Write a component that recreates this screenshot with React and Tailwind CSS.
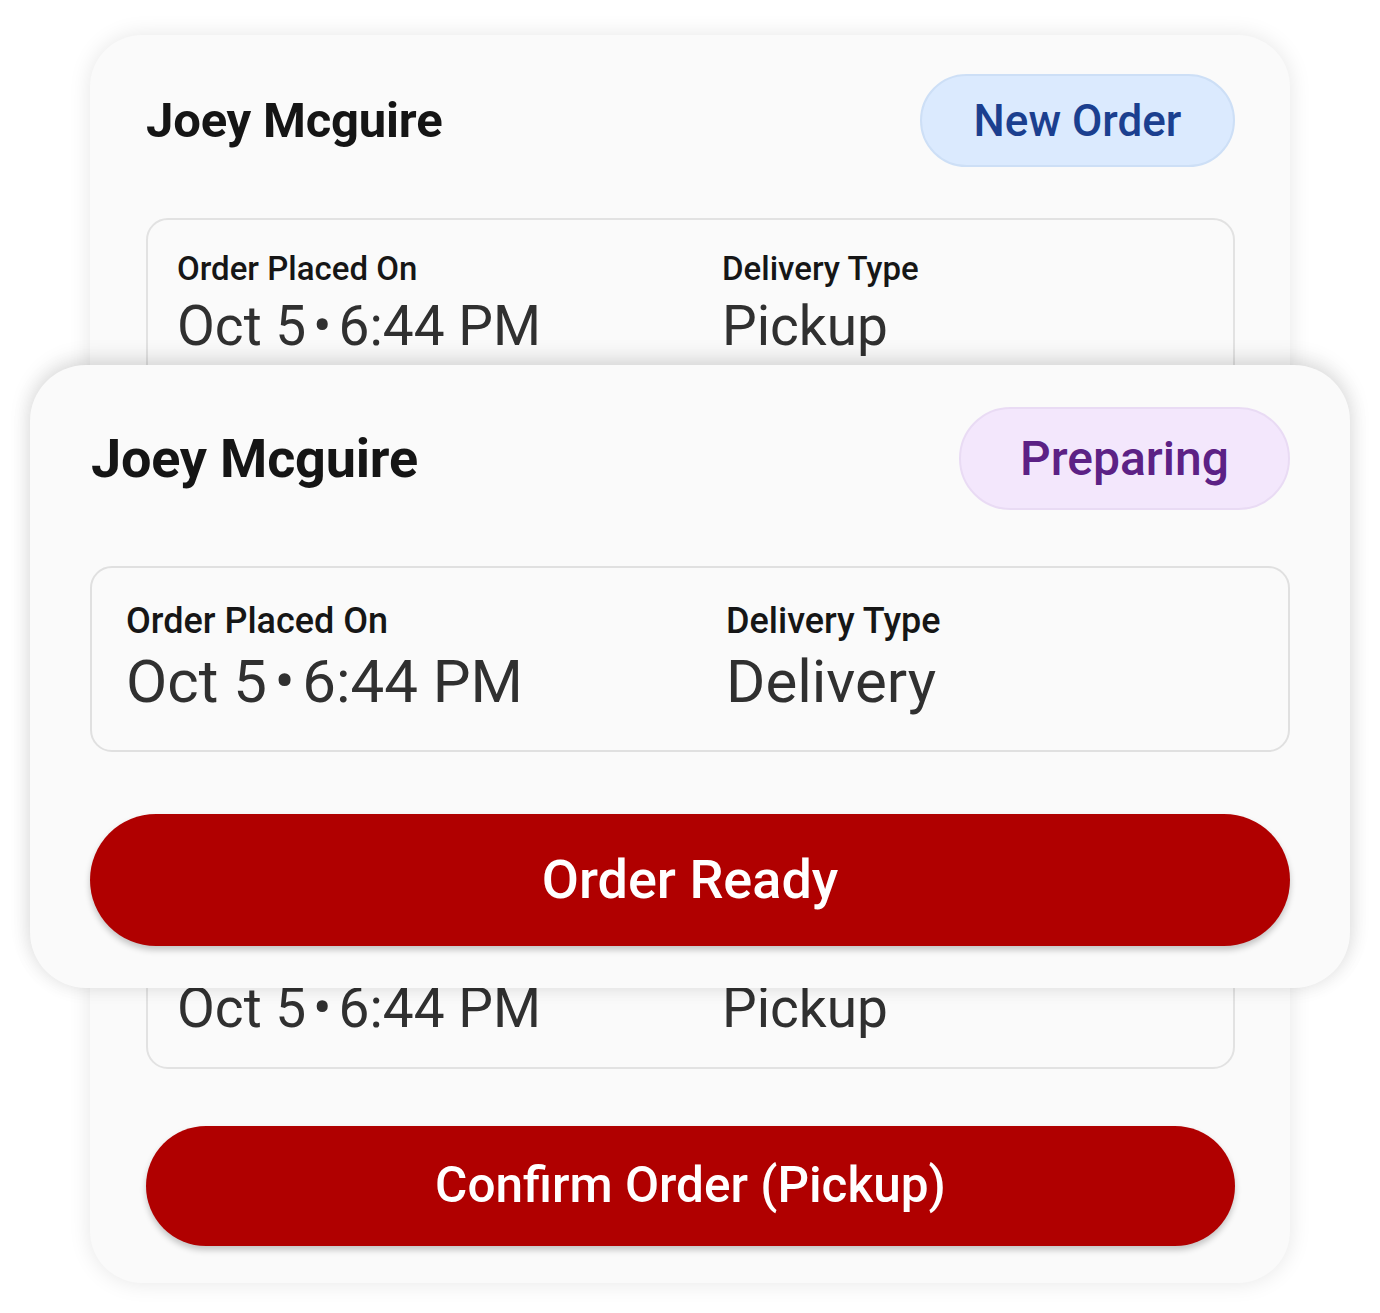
import React from "react";

const font = { fontFamily: "Roboto, 'Noto Sans', sans-serif" };

function DateValue() {
  return (
    <>
      Oct 5<span className="mx-[0.125em]">•</span>6:44 PM
    </>
  );
}

function BackRow({ type }) {
  return (
    <div className="grid grid-cols-[545px_1fr]">
      <div>
        <div className="text-[33px] leading-none font-medium text-[#161616]">Order Placed On</div>
        <div className="mt-[14px] text-[55px] leading-none text-[#303030]">
          <DateValue />
        </div>
      </div>
      <div>
        <div className="text-[33px] leading-none font-medium text-[#161616]">Delivery Type</div>
        <div className="mt-[14px] text-[55px] leading-none text-[#303030]">{type}</div>
      </div>
    </div>
  );
}

export default function App() {
  return (
    <div className="relative w-[1380px] h-[1313px] bg-white" style={font}>
      {/* Back card */}
      <div className="absolute left-[90px] top-[35px] w-[1200px] h-[1248px] rounded-[52px] bg-[#fafafa] shadow-[0_0_22px_rgba(0,0,0,0.10)] pl-[56px] pr-[55px] pt-[39px] pb-[37px] flex flex-col">
        <div className="flex items-center justify-between">
          <div className="text-[49px] leading-none font-bold text-[#151515] tracking-[-0.2px]">Joey Mcguire</div>
          <div className="h-[93px] w-[315px] rounded-full bg-[#dbeafe] border-2 border-[#cddff6] flex items-center justify-center text-[44px] font-medium text-[#1b3f8f] leading-none">
            New Order
          </div>
        </div>
        <div className="mt-[51px] h-[851px] rounded-[22px] border-2 border-[#e2e2e2] pl-[29px] pt-[32px] pb-[31px] flex flex-col justify-between">
          <BackRow type="Pickup" />
          <BackRow type="Pickup" />
        </div>
        <button className="mt-[57px] h-[120px] w-full rounded-full bg-[#b00000] text-white text-[49.5px] font-medium leading-none shadow-[0_4px_6px_rgba(0,0,0,0.22)]">
          Confirm Order (Pickup)
        </button>
      </div>

      {/* Front card */}
      <div className="absolute left-[30px] top-[365px] w-[1320px] h-[623px] rounded-[56px] bg-[#fafafa] shadow-[0_-6px_22px_rgba(0,0,0,0.11),0_0_20px_rgba(0,0,0,0.08)] px-[60px] pt-[42px] pb-[42px] flex flex-col">
        <div className="flex items-center justify-between">
          <div className="ml-[1px] text-[54px] leading-none font-bold text-[#151515] tracking-[-0.2px]">Joey Mcguire</div>
          <div className="h-[103px] w-[331px] rounded-full bg-[#f3e7fc] border-2 border-[#e9dbf4] flex items-center justify-center text-[48px] font-medium text-[#5c2185] leading-none">
            Preparing
          </div>
        </div>
        <div className="mt-[56px] h-[186px] rounded-[22px] border-2 border-[#e0e0e0] pl-[34px] pt-[35px]">
          <div className="grid grid-cols-[600px_1fr]">
            <div>
              <div className="text-[36px] leading-none font-medium text-[#161616]">Order Placed On</div>
              <div className="mt-[13px] text-[60px] leading-none text-[#303030]">
                <DateValue />
              </div>
            </div>
            <div>
              <div className="text-[36px] leading-none font-medium text-[#161616]">Delivery Type</div>
              <div className="mt-[13px] text-[60px] leading-none text-[#303030]">Delivery</div>
            </div>
          </div>
        </div>
        <button className="mt-[62px] h-[132px] w-full rounded-full bg-[#b00000] text-white text-[54px] font-medium leading-none shadow-[0_4px_6px_rgba(0,0,0,0.22)]">
          Order Ready
        </button>
      </div>
    </div>
  );
}
